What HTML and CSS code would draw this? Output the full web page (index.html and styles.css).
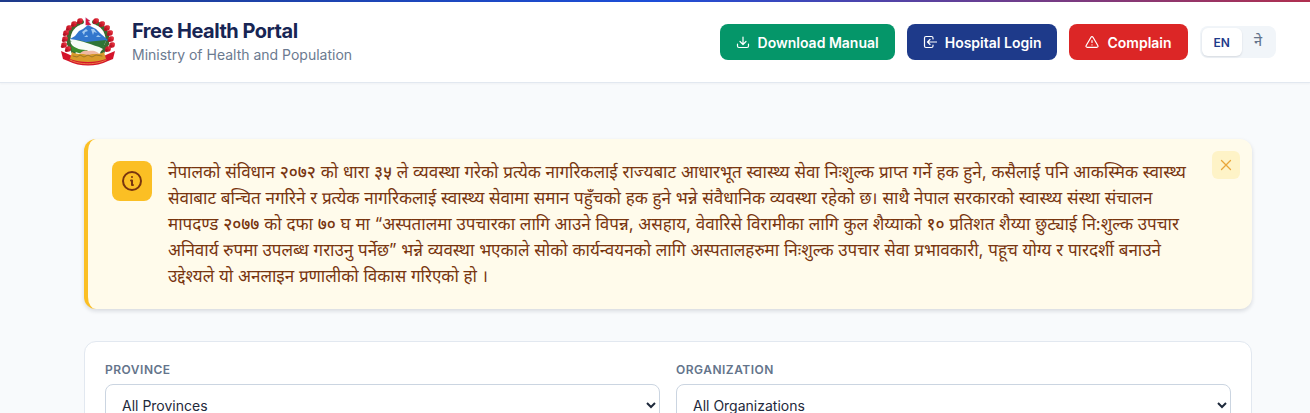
FILE: index.html
```html
<!DOCTYPE html>
<html lang="en">
<head>
<meta charset="utf-8">
<title>Free Health Portal</title>
<link rel="stylesheet" href="styles.css">
</head>
<body>
<div class="accent"></div>
<header class="header">
  <div class="brand">
    <svg class="emblem" viewBox="0 0 56 50" role="img" aria-label="Emblem of Nepal">
      <defs><g id="flower"><circle r="2.800" fill="#cf1c2c"/><circle cx="-1.600" cy="1.500" r="1.500" fill="#b01425"/><circle cx="1.500" cy="-1.200" r="1.200" fill="#e2323f"/></g></defs>
      <path d="M22 5C12 8 7 17 9 27l5 9M34 5c10 3 15 12 13 22l-5 9" fill="none" stroke="#3b6b31" stroke-width="4" stroke-dasharray="2 1"/>
      <path d="M10 22l5-3 4-5 4-2 5-4 4 2 4 2 5 5 7 6-8 4H14z" fill="#3276cd"/>
      <path d="M22 15l4-3 2 2-3 1-1 3zM31 12l3 0 3 4-3-1-1 3zM24 20l3-2 1 2zM36 20l2-2 3 2z" fill="#9fc8ef"/>
      <path d="M10 24l8-1 8 2 20-2-3 9-14-1-13-4z" fill="#2f7536"/>
      <path d="M10 22c7 1 12 2 17 4 5 2 11 3 16 6l-4 4-11-1c-7 0-14-4-18-13z" fill="#f7fbf5"/>
      <path d="M11 27c4 5 11 6 17 6l-6 4-10-3z" fill="#3c8d2c"/>
      <path d="M19 38c3-5 7-5 10-4 5-1 10 1 10 4l-5 3H24z" fill="#efb9a4"/>
      <use href="#flower" x="20" y="4"/><use href="#flower" x="14" y="7"/><use href="#flower" x="9" y="11"/><use href="#flower" x="6" y="16"/><use href="#flower" x="5" y="22"/><use href="#flower" x="4" y="28"/><use href="#flower" x="8" y="32"/><use href="#flower" x="36" y="4"/><use href="#flower" x="42" y="7"/><use href="#flower" x="47" y="11"/><use href="#flower" x="50" y="16"/><use href="#flower" x="51" y="22"/><use href="#flower" x="52" y="28"/><use href="#flower" x="48" y="32"/>
      <path d="M1 34l7 3c12 7 28 7 40 0l7-3-2 8-5 2c-12 6-28 6-40 0l-5-2z" fill="#d4142a"/>
      <path d="M12 35c5 3 10 1 16 3 6-2 11 0 16-3l2 7c-10 4-26 4-36 0z" fill="#d99a2b"/>
      <path d="M13 39l4 1 3-2 4 2 4-2 4 2 4-2 6 1" fill="none" stroke="#9c7626"/>
      <path d="M10 43c10 5 26 5 36 0" fill="none" stroke="#ec8444" stroke-dasharray="2 1"/>
      <path d="M26 1l4 3h-2l3 4h-5z" fill="#dc143c" stroke="#b83a72" stroke-width=".5"/>
    </svg>
    <div class="brand-text">
      <h1 class="brand-name">Free Health Portal</h1>
      <p class="brand-sub">Ministry of Health and Population</p>
    </div>
  </div>
  <nav class="actions">
    <button class="btn btn-green" type="button"><svg viewBox="0 0 14 14"><path d="M7 2v7M4 6.500l3 3 3-3M1.500 9v2c0 1 .5 1.500 1.500 1.500h8c1 0 1.500-.5 1.500-1.500V9"/></svg>Download Manual</button>
    <button class="btn btn-blue" type="button"><svg viewBox="0 0 14 14"><path d="M10 4V3c0-1-.5-1.500-1.500-1.500H3C2 1.500 1.500 2 1.500 3v8c0 1 .5 1.500 1.500 1.500h5.500c1 0 1.500-.5 1.500-1.500v-1M13.500 7H4.500M7 4.500L4.500 7 7 9.500"/></svg>Hospital Login</button>
    <button class="btn btn-red" type="button"><svg viewBox="0 0 14 14"><path d="M6 2.200L1.200 10.500c-.6 1 0 1.800 1 1.800h9.600c1 0 1.600-.8 1-1.800L8 2.200c-.5-.9-1.500-.9-2 0zM7 5.500v2M7 9.800v.2"/></svg>Complain</button>
    <div class="lang">
      <button class="lang-item lang-active" type="button">EN</button>
      <button class="lang-item lang-ne" type="button" lang="ne">ने</button>
    </div>
  </nav>
</header>
<main class="main">
  <section class="notice">
    <div class="notice-icon"><svg viewBox="0 0 24 24"><circle cx="12" cy="12" r="9"/><path d="M11 11.500h1V16h1M12 8v.1"/></svg></div>
    <p class="notice-text" lang="ne">नेपालको संविधान <b>२०७२</b> को धारा <b>३५</b> ले व्यवस्था गरेको प्रत्येक नागरिकलाई राज्यबाट आधारभूत स्वास्थ्य सेवा निःशुल्क प्राप्त गर्ने हक हुने, कसैलाई पनि आकस्मिक स्वास्थ्य<br>सेवाबाट बन्चित नगरिने र प्रत्येक नागरिकलाई स्वास्थ्य सेवामा समान पहुँचको हक हुने भन्ने संवैधानिक व्यवस्था रहेको छ। साथै नेपाल सरकारको स्वास्थ्य संस्था संचालन<br>मापदण्ड <b>२०७७</b> को दफा <b>७०</b> घ मा “अस्पतालमा उपचारका लागि आउने विपन्न, असहाय, वेवारिसे विरामीका लागि कुल शैय्याको <b>१०</b> प्रतिशत शैय्या छुट्याई नि:शुल्क उपचार<br>अनिवार्य रुपमा उपलब्ध गराउनु पर्नेछ” भन्ने व्यवस्था भएकाले सोको कार्यन्वयनको लागि अस्पतालहरुमा निःशुल्क उपचार सेवा प्रभावकारी, पहूच योग्य र पारदर्शी बनाउने<br>उद्देश्यले यो अनलाइन प्रणालीको विकास गरिएको हो ।</p>
    <button class="close" type="button" aria-label="Close"><svg viewBox="0 0 14 14"><path d="M2.500 2.500l9 9M11.500 2.500l-9 9"/></svg></button>
  </section>
  <form class="filters">
    <div class="field">
      <label for="province">PROVINCE</label>
      <select id="province"><option>All Provinces</option></select>
    </div>
    <div class="field">
      <label for="organization">ORGANIZATION</label>
      <select id="organization"><option>All Organizations</option></select>
    </div>
  </form>
</main>
</body>
</html>
```
FILE: styles.css
```css
* { box-sizing: border-box; }
html { scrollbar-width: none; }
body {
  margin: 0;
  background: #f8fafc;
  color: #1e293b;
  font-family: Inter, "Noto Sans Devanagari", "Noto Sans", sans-serif;
}
h1, p { margin: 0; }
button { border: 0; font-family: inherit; cursor: pointer; }
svg { fill: none; stroke: currentColor; stroke-linecap: round; stroke-linejoin: round; flex: none; }
.accent { height: 2px; background: linear-gradient(90deg, #1e3a8a, #1d4ed8 50%, #dc2626 115%); }
.header {
  display: flex;
  align-items: center;
  justify-content: space-between;
  padding: 15px 34px 15px 60px;
  background: #fff;
  border-bottom: 1px solid #e2e8f0;
  box-shadow: 0 1px 2px rgba(15, 23, 42, 0.04);
}
.brand { display: flex; align-items: center; gap: 16px; }
.brand-text { padding-top: 2px; }
.emblem { width: 56px; height: 50px; stroke: none; }
.brand-name { font-size: 20px; line-height: 24px; font-weight: 700; color: #172554; letter-spacing: -0.5px; }
.brand-sub { font-size: 14px; line-height: 24px; color: #6b7a90; }
.actions { display: flex; align-items: center; gap: 12px; }
.btn {
  display: flex;
  align-items: center;
  gap: 8px;
  height: 36px;
  padding: 0 16px;
  border-radius: 8px;
  color: #fff;
  font-size: 14px;
  font-weight: 600;
}
.btn svg { width: 14px; height: 14px; stroke-width: 1.2; }
.btn-green { background: #059669; }
.btn-blue { background: #1e3a8a; }
.btn-red { background: #dc2626; }
.lang { display: flex; padding: 2px; border-radius: 8px; background: #f1f5f9; }
.lang-item {
  height: 28px;
  padding: 0 12px;
  border-radius: 6px;
  background: transparent;
  color: #64748b;
  font-size: 12px;
  font-weight: 500;
}
.lang-item.lang-ne { font-size: 14px; }
.lang-active { background: #fff; color: #1e3a8a; font-weight: 600; box-shadow: 0 1px 2px rgba(15, 23, 42, 0.12); }
.main { padding: 56px 58px 32px 84px; }
.notice {
  display: flex;
  align-items: flex-start;
  gap: 16px;
  padding: 20px 12px 20px 24px;
  border-left: 4px solid #fbbf24;
  border-radius: 12px;
  background: #fffbeb;
  box-shadow: 0 2px 4px rgba(15, 23, 42, 0.14);
}
.notice-icon {
  display: grid;
  place-items: center;
  flex: none;
  width: 40px;
  height: 40px;
  margin-top: 2px;
  border-radius: 8px;
  background: #fbbf24;
  color: #78350f;
}
.notice-icon svg { width: 24px; height: 24px; stroke-width: 2; }
.notice-text { flex: 1; min-width: 0; font-size: 17px; line-height: 26px; color: #78350f; }
.notice-text b { font-weight: 500; }
.close {
  display: grid;
  place-items: center;
  width: 28px;
  height: 28px;
  margin-top: -8px;
  padding: 0;
  border-radius: 6px;
  background: #fef3c7;
  color: #e9a63a;
}
.close svg { width: 14px; height: 14px; stroke-width: 1.3; }
.filters {
  display: grid;
  grid-template-columns: 1fr 1fr;
  gap: 16px;
  margin-top: 32px;
  padding: 20px;
  border: 1px solid #e2e8f0;
  border-radius: 12px;
  background: #fff;
}
.field { display: flex; flex-direction: column; gap: 6px; }
.field label { font-size: 12px; line-height: 16px; font-weight: 600; letter-spacing: 0.5px; color: #64748b; }
.field select {
  height: 42px;
  padding: 0 12px;
  border: 1px solid #cbd5e1;
  border-radius: 8px;
  background: #fff;
  color: #1e293b;
  font-family: inherit;
  font-size: 14px;
}
```
